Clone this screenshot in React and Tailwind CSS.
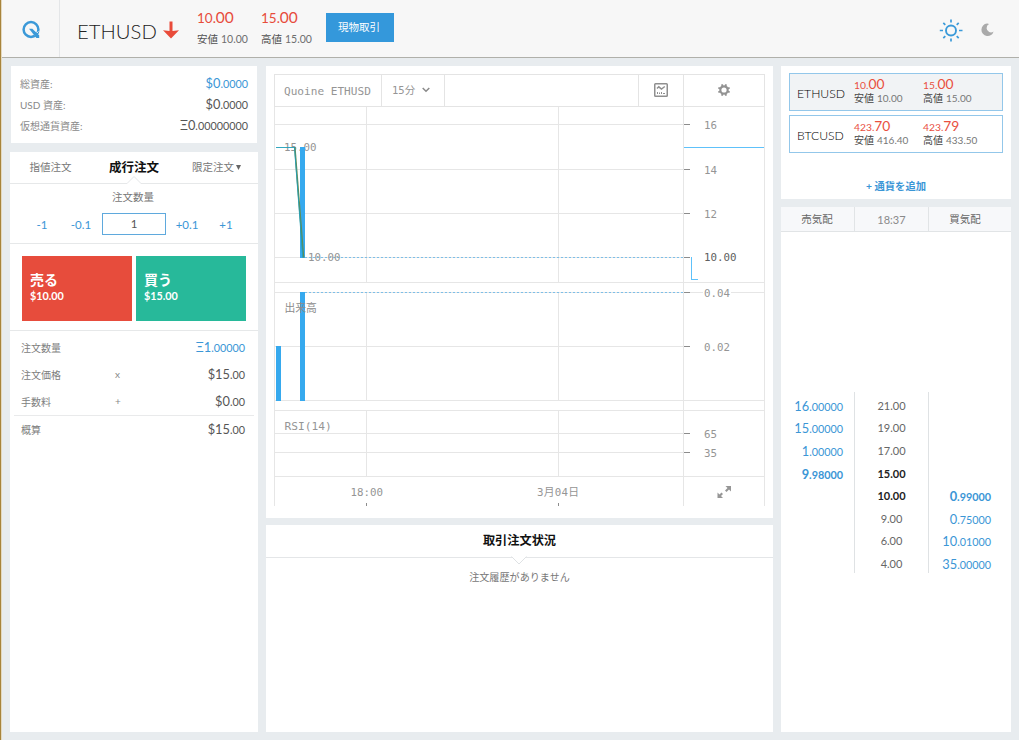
import React from "react";

const GRID = "#e6e6e6";
const TICK = "#8c8c8c";

function Amount({ whole, rest, className = "" }) {
  return (
    <span className={"whitespace-nowrap text-[12.8px] leading-none " + className}>
      {whole}
      <span className="text-[10.8px]">{rest}</span>
    </span>
  );
}

function AssetRow({ label, whole, rest, color }) {
  return (
    <div className="flex h-[21px] items-center justify-between">
      <span className="text-[10px] leading-none text-[#8a8a8a]">{label}</span>
      <Amount whole={whole} rest={rest} className={color} />
    </div>
  );
}

function SummaryRow({ label, op, whole, rest, color }) {
  return (
    <div className="flex h-[27px] items-center">
      <span className="w-[94px] text-[10px] leading-none text-[#808080]">{label}</span>
      <span className="pb-[1px] text-[10px] leading-none text-[#8a8a8a]">{op}</span>
      <Amount whole={whole} rest={rest} className={"ml-auto " + color} />
    </div>
  );
}

function HeaderPrice({ price, cents, label, value }) {
  return (
    <div className="flex flex-col">
      <div className="flex h-[19px] items-baseline text-[13.500px] leading-[19px] text-[#e74c3c]">
        {price}
        <span className="text-[15.500px]">{cents}</span>
      </div>
      <div className="mt-[4px] flex h-[16px] items-center text-[10.5px] leading-none text-[#6e6e6e]">
        <span className="mr-[3px] text-[10.5px] text-[#505050]">{label}</span>
        {value}
      </div>
    </div>
  );
}

function TickerPrice({ small, big, label, value }) {
  return (
    <div className="w-[69px]">
      <div className="h-[14px] whitespace-nowrap text-[10.300px] leading-[14px] text-[#e9503f]">
        {small}
        <span className="text-[13.800px]">{big}</span>
      </div>
      <div className="flex h-[13px] items-center whitespace-nowrap text-[10px] leading-none text-[#777]">
        <span className="mr-[3px] text-[#444]">{label}</span>
        {value}
      </div>
    </div>
  );
}

function Ticker({ name, active, children }) {
  return (
    <div
      className={
        "flex h-[38px] items-start border border-[#93c7ea] pl-[7px] pt-[3px] " +
        (active ? "bg-[#f1f3f5]" : "bg-white")
      }
    >
      <span className="w-[57px] pt-[10px] text-[12.200px] font-light leading-[14px] text-black">{name}</span>
      {children}
    </div>
  );
}

const BOOK = [
  ["16", ".00000", "21.00", "", "", false],
  ["15", ".00000", "19.00", "", "", false],
  ["1", ".00000", "17.00", "", "", false],
  ["9", ".98000", "15.00", "", "", true],
  ["", "", "10.00", "0", ".99000", true],
  ["", "", "9.00", "0", ".75000", false],
  ["", "", "6.00", "10", ".01000", false],
  ["", "", "4.00", "35", ".00000", false],
];

function Chart() {
  const hShort = [124.5, 169.5, 213.5, 257.5, 346.5, 433.5, 452.5];
  const hFull = [282.5, 292.5, 400.5, 410.5, 476.5];
  const labels = [
    [129, "16"],
    [174, "14"],
    [218, "12"],
    [351, "0.02"],
    [438, "65"],
    [457, "35"],
  ];
  return (
    <svg
      width="491"
      height="400"
      viewBox="274 107 491 400"
      className="block font-['DejaVu_Sans_Mono','Noto_Sans_CJK_JP',monospace] text-[10.8px]"
    >
      <g stroke={GRID} strokeWidth="1" shapeRendering="crispEdges">
        {hShort.map((y) => (
          <path key={y} d={`M274 ${y}H683`} />
        ))}
        {hFull.map((y) => (
          <path key={y} d={`M274 ${y}H765`} />
        ))}
        {[366.5, 558.5].map((x) => (
          <path key={x} d={`M${x} 107V282M${x} 293V400M${x} 411V476`} />
        ))}
        <path d="M274.5 107V506M683.5 107V506M764.5 107V506" />
      </g>
      <rect x="703" y="288" width="28" height="10" fill="#fff" />
      <g stroke={TICK} shapeRendering="crispEdges">
        {[124.5, 169.5, 213.5, 257.5, 292.5, 346.5, 433.5, 452.5].map((y) => (
          <path key={y} d={`M684 ${y}H690`} />
        ))}
        <path d="M366.5 503V506M558.5 503V506" />
      </g>
      <g fill="none" stroke="#7dbfe8" strokeDasharray="2 2" shapeRendering="crispEdges">
        <path d="M305 257.5H684M305 292.5H684" />
      </g>
      <g fill="#959595">
        {labels.map(([y, t]) => (
          <text key={y} x="704" y={y}>{t}</text>
        ))}
        <text x="704" y="297">0.04</text>
        <text x="704" y="261" fill="#606060">10.00</text>
        <text x="284" y="151">15.00</text>
        <text x="284.500" y="430" className="text-[11.2px]">RSI(14)</text>
        <text x="350.500" y="496">18:00</text>
        <text x="537" y="496" textLength="42">3月04日</text>
      </g>
      <g fill="#36a9ee" shapeRendering="crispEdges">
        <rect x="300" y="147" width="5" height="111" />
        <rect x="300" y="292" width="5" height="109" />
        <rect x="276" y="346" width="5" height="55" />
      </g>
      <text x="284.500" y="311.500" fill="#8c8c8c">出来高</text>
      <text x="308" y="261" fill="#959595">10.00</text>
      <path d="M294.800 147L303.500 257.500" fill="none" stroke="#648c50" strokeWidth="1.600" />
      <path d="M276 147.500H294.500L302.800 257.500" fill="none" stroke="#1d9db8" strokeWidth="0.900" />
      <g fill="none" stroke="#5ec1fa" shapeRendering="crispEdges">
        <path d="M684 147.500H764M691.500 257V279.500H698" />
      </g>
      <g fill="#969696">
        <path d="M725.500 486H731V491.500L729 489.500L726.500 492L725 490.500L727.500 488Z" />
        <path d="M723 498H717.500V492.500L719.500 494.500L721.500 492.500L723 494L721 496Z" />
      </g>
    </svg>
  );
}

export default function App() {
  return (
    <div className="flex h-[740px] w-[1019px] overflow-hidden bg-[#e8ecef] font-['Lato','Noto_Sans_CJK_JP',sans-serif] text-[#666]">
      <div className="w-[2px] shrink-0 border-l border-[#a8843c] bg-[#e4d9bf]" />
      <div className="flex min-w-0 flex-1 flex-col">
        <header className="flex h-[58px] shrink-0 border-b border-[#b0b0aa] bg-[#f7f7f7]">
          <div className="flex w-[58px] shrink-0 items-center justify-center border-r border-[#e4e6e8]">
            <svg width="20" height="20" viewBox="0 0 20 20" fill="none" stroke="#3b99d8" className="mt-[3px] ml-[1px]">
              <circle cx="10" cy="9.500" r="7.400" strokeWidth="2.500" />
              <path d="M13.500 15L17.500 11.500" stroke="#f7f7f7" strokeWidth="1" />
              <path d="M8 8.800H11.300L18.200 15.300V18H15.400Z" fill="#3b99d8" stroke="none" />
            </svg>
          </div>
          <div className="flex pl-[17px]">
            <span className="w-[86px] pt-[18px] text-[20.300px] font-light leading-[26px] text-[#222]">ETHUSD</span>
            <svg width="16" height="18" viewBox="0 0 16 18" fill="#e94b3a" className="mt-[21px]">
              <path d="M6.500 0.500H9.500V10L16 9.200L8 17.500L0 9.200L6.500 10Z" />
            </svg>
          </div>
          <div className="flex pl-[18px] pt-[8px]">
            <div className="w-[64px]">
              <HeaderPrice price="10." cents="00" label="安値" value="10.00" />
            </div>
            <div className="w-[65px]">
              <HeaderPrice price="15." cents="00" label="高値" value="15.00" />
            </div>
          </div>
          <button className="mt-[13px] h-[29px] w-[68px] bg-[#3498db] pr-[2px] text-[10.5px] leading-none text-white">
            現物取引
          </button>
          <div className="ml-auto flex pr-[25px] pt-[19px]">
            <svg width="24" height="24" viewBox="0 0 24 24" fill="none" stroke="#3b9ad9" strokeWidth="1.900">
              <circle cx="12" cy="11.500" r="5" />
              <path
                d="M12 0.500V3.500M12 19.500V22.500M0.800 11.500H4M20 11.500H23.500M4.300 3.800L6.300 5.800M17.700 17.200L19.700 19.200M4.300 19.200L6.300 17.200M17.700 5.800L19.700 3.800"
                strokeWidth="1.700"
              />
            </svg>
            <svg width="13" height="14" viewBox="0 0 13 14" fill="#aaa" className="ml-[18px] mt-[4px]">
              <path d="M6 0.600A6.200 6.200 0 1 0 12.600 8.400A4.300 4.300 0 0 1 5.600 5.300A4.800 4.800 0 0 1 8 0.900Q7 0.500 6 0.600Z" />
            </svg>
          </div>
        </header>

        <main className="flex h-[674px] gap-[8px] pl-[8px] pt-[8px]">
          <aside className="flex w-[248px] shrink-0 flex-col">
            <section className="ml-[1px] mr-[1px] h-[77px] bg-white pl-[9px] pr-[9px] pt-[7px]">
              <AssetRow label="総資産:" whole="$0" rest=".0000" color="text-[#3b96d6]" />
              <AssetRow label="USD 資産:" whole="$0" rest=".0000" color="text-[#555]" />
              <AssetRow label="仮想通貨資産:" whole="Ξ0" rest=".00000000" color="text-[#555]" />
            </section>

            <section className="mt-[9px] h-[580px] bg-white">
              <div className="flex h-[32px] items-center border-b border-[#e6e8e9] text-[10.5px] leading-none text-[#777]">
                <span className="w-[82px] pr-[1px] text-center">指値注文</span>
                <span className="relative flex h-[31px] w-[84px] items-center justify-center pt-[1px] text-[12.5px] font-bold text-[#111]">
                  成行注文
                  <svg width="16" height="8" viewBox="0 0 16 8" className="absolute bottom-[-1px] left-[34px]">
                    <path d="M0.500 8L8 0.500L15.500 8Z" fill="#fff" stroke="#e4e6e8" />
                    <path d="M1.500 8H14.500" stroke="#fff" strokeWidth="2" />
                  </svg>
                </span>
                <span className="flex w-[82px] items-center justify-center pr-[1px]">
                  限定注文
                  <svg width="5" height="5" viewBox="0 0 5 5" fill="#666" className="ml-[2px]">
                    <path d="M0 0H5L2.500 5Z" />
                  </svg>
                </span>
              </div>
              <div className="h-[60px] border-b border-[#e6e8e9]">
                <div className="flex h-[28px] items-center justify-center pb-[2px] pr-[2px] text-[10.500px] leading-none text-[#777]">
                  注文数量
                </div>
                <div className="flex h-[24px] items-center text-center text-[11.500px] text-[#3b96d6]">
                  <span className="ml-[17px] w-[30px] pt-[2px]">-1</span>
                  <span className="ml-[9px] w-[30px] pt-[2px]">-0.1</span>
                  <span className="ml-[6px] h-[22px] w-[64px] border border-[#5fa9dd] leading-[20px] text-[#555]">1</span>
                  <span className="ml-[6px] w-[30px] pt-[2px]">+0.1</span>
                  <span className="ml-[9px] w-[30px] pt-[2px]">+1</span>
                </div>
              </div>
              <div className="flex h-[87px] gap-[4px] border-b border-[#e6e8e9] px-[12px] pt-[12px] text-white">
                <button className="h-[65px] w-[110px] bg-[#e74c3c] pb-[4px] pl-[8px] text-left">
                  <div className="text-[14px] font-bold leading-[18px]">売る</div>
                  <div className="text-[10.800px] font-bold leading-[14px]">$10.00</div>
                </button>
                <button className="h-[65px] w-[110px] bg-[#27b99a] pb-[4px] pl-[8px] text-left">
                  <div className="text-[14px] font-bold leading-[18px]">買う</div>
                  <div className="text-[10.800px] font-bold leading-[14px]">$15.00</div>
                </button>
              </div>
              <div className="px-[4px] pt-[3px]">
                <div className="border-b border-[#e9eaeb] pl-[7px] pr-[9px]">
                  <SummaryRow label="注文数量" whole="Ξ1" rest=".00000" color="text-[#3b96d6]" />
                  <SummaryRow label="注文価格" op="x" whole="$15" rest=".00" color="text-[#555]" />
                  <SummaryRow label="手数料" op="+" whole="$0" rest=".00" color="text-[#555]" />
                </div>
                <div className="pl-[7px] pr-[9px]">
                  <SummaryRow label="概算" whole="$15" rest=".00" color="text-[#555]" />
                </div>
              </div>
            </section>
          </aside>

          <div className="flex w-[507px] shrink-0 flex-col gap-[7px]">
            <section className="h-[452px] bg-white pl-[8px] pt-[8px]">
              <div className="flex h-[33px] w-[491px] border border-[#e4e4e4] font-['DejaVu_Sans_Mono','Noto_Sans_CJK_JP',monospace] text-[11px] leading-none text-[#959595]">
                <div className="flex w-[107px] items-center whitespace-nowrap border-r border-[#e4e4e4] pl-[9px] pt-[2px] text-[11.100px]">
                  Quoine ETHUSD
                </div>
                <div className="flex w-[63px] items-center border-r border-[#e4e4e4] pl-[10px]">
                  <span className="whitespace-nowrap text-[10.500px]">15分</span>
                  <svg width="8" height="6" viewBox="0 0 8 6" fill="none" stroke="#8a8a8a" strokeWidth="1.500" className="ml-[7px] mt-[-2px]">
                    <path d="M0.700 1L4 4.300L7.300 1" />
                  </svg>
                </div>
                <div className="flex-1" />
                <div className="flex w-[46px] items-center justify-center border-x border-[#e4e4e4] pb-[1px]">
                  <svg width="14" height="14" viewBox="0 0 14 14" fill="none" stroke="#8f8f8f">
                    <rect x="0.750" y="0.750" width="12.500" height="12.500" rx="0.800" strokeWidth="1.500" />
                    <path d="M3 5.500L4.800 3.800L7.500 6L10.800 3.500" strokeWidth="1.500" />
                    <path d="M3.500 9V11M5.500 9.500V11M7.500 9V11M9 10.500H11" />
                  </svg>
                </div>
                <div className="flex w-[80px] items-center justify-center pb-[2px]">
                  <svg width="12" height="12" viewBox="0 0 12 12" fill="none" stroke="#929292">
                    <circle cx="6" cy="6" r="3.700" strokeWidth="2.200" />
                    <path d="M4.200 0.300V2M7.800 0.300V2M4.200 10V11.700M7.800 10V11.700M0.300 4.200H2M0.300 7.800H2M10 4.200H11.700M10 7.800H11.700" strokeWidth="1.800" />
                  </svg>
                </div>
              </div>
              <Chart />
            </section>
            <section className="flex h-[207px] flex-col items-center bg-white">
              <div className="relative flex h-[33px] w-full items-center justify-center border-b border-[#e4e6e8] text-[12.200px] font-bold leading-none text-[#111]">
                取引注文状況
                <svg width="16" height="9" viewBox="0 0 16 9" className="absolute bottom-[-8px] left-[245px]">
                  <path d="M0 0H16L8 8Z" fill="#fff" />
                  <path d="M0.500 0.500L8 8L15.500 0.500" fill="none" stroke="#dfe2e4" />
                </svg>
              </div>
              <div className="mt-[12px] text-[10.100px] leading-[15px] text-[#777]">注文履歴がありません</div>
            </section>
          </div>

          <aside className="flex w-[230px] shrink-0 flex-col gap-[8px]">
            <section className="flex h-[133px] flex-col gap-[4px] bg-white px-[8px] pt-[7px]">
              <Ticker name="ETHUSD" active>
                <TickerPrice small="10." big="00" label="安値" value="10.00" />
                <TickerPrice small="15." big="00" label="高値" value="15.00" />
              </Ticker>
              <Ticker name="BTCUSD">
                <TickerPrice small="423." big="70" label="安値" value="416.40" />
                <TickerPrice small="423." big="79" label="高値" value="433.50" />
              </Ticker>
              <div className="mt-[22px] text-center text-[10.300px] font-bold leading-[15px] text-[#3b96d6]">
                + 通貨を追加
              </div>
            </section>
            <section className="h-[525px] bg-white">
              <div className="flex h-[25px] items-center border-b border-[#e1e4e6] bg-[#f7f8fa] text-center text-[10.500px] leading-[24px] text-[#666]">
                <span className="w-[74px] border-r border-[#e1e4e6] pr-[1px]">売気配</span>
                <span className="w-[74px] border-r border-[#e1e4e6] pt-[2px] text-[11px] leading-[22px] text-[#8a8a8a]">18:37</span>
                <span className="w-[74px] pr-[2px]">買気配</span>
              </div>
              <div className="mt-[160px] flex h-[181px]">
                <div className="w-[74px] border-r border-[#dfe2e4] pt-[3px]">
                  {BOOK.map(([a, b, , , , bold], i) => (
                    <div key={i} className="flex h-[22.600px] items-center justify-end pr-[11px]">
                      <Amount whole={a} rest={b} className={"text-[#3b96d6] " + (bold ? "font-bold" : "")} />
                    </div>
                  ))}
                </div>
                <div className="w-[74px] border-r border-[#dfe2e4] pt-[2px]">
                  {BOOK.map(([, , p, , , bold], i) => (
                    <div
                      key={i}
                      className={
                        "flex h-[22.600px] items-center justify-center text-[11px] leading-none " +
                        (bold ? "font-bold text-[#222]" : "text-[#666]")
                      }
                    >
                      {p}
                    </div>
                  ))}
                </div>
                <div className="w-[82px] pt-[3px]">
                  {BOOK.map(([, , , a, b, bold], i) => (
                    <div key={i} className="flex h-[22.600px] items-center justify-end pr-[20px]">
                      <Amount
                        whole={a}
                        rest={b}
                        className={"text-[#3b96d6] " + (bold && a ? "font-bold" : "")}
                      />
                    </div>
                  ))}
                </div>
              </div>
            </section>
          </aside>
        </main>
      </div>
    </div>
  );
}
